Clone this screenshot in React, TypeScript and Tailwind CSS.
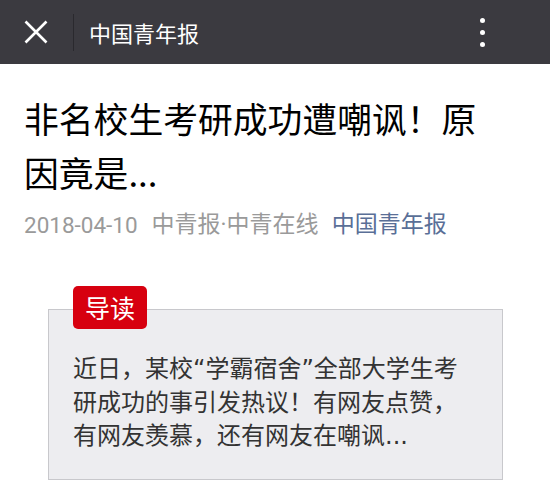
import React from "react";

export default function App() {
  const cjk = { fontFamily: '"Noto Sans CJK SC", "Noto Sans", sans-serif' };
  const mixed = { fontFamily: 'Roboto, "Noto Sans CJK SC", sans-serif' };
  return (
    <div className="w-[550px] h-[497px] bg-white overflow-hidden" style={cjk}>
      <div className="h-16 bg-[#3b3a40] flex items-center relative">
        <div className="w-[73px] h-full flex items-center justify-center">
          <svg width="24" height="24" viewBox="0 0 24 24" className="ml-[-2px]">
            <path d="M1.5 1.5 L22.5 22.5 M22.5 1.5 L1.5 22.5" stroke="#ffffff" strokeWidth="2.6" strokeLinecap="butt" />
          </svg>
        </div>
        <div className="w-px h-[37px] bg-[#2a292e]" />
        <div className="ml-[15px] text-white text-[22px] leading-none">中国青年报</div>
        <div className="ml-auto mr-[65px] flex flex-col gap-[7px]">
          <div className="w-[5px] h-[5px] rounded-full bg-white" />
          <div className="w-[5px] h-[5px] rounded-full bg-white" />
          <div className="w-[5px] h-[5px] rounded-full bg-white" />
        </div>
      </div>
      <div className="px-6">
        <h1 className="mt-[27px] w-[472px] text-[34.8px] leading-[54px] text-black font-normal">
          非名校生考研成功遭嘲讽！原因竟是...
        </h1>
        <div className="mt-[11px] text-[23px] leading-[30px] flex" style={mixed}>
          <span className="text-[#9a9a9a] text-[22.5px]">2018-04-10</span>
          <span className="text-[#9a9a9a] ml-[14px]">中青报·中青在线</span>
          <span className="text-[#5a6f97] ml-[13px]">中国青年报</span>
        </div>
        <div className="relative ml-6 mr-[23px] mt-[69px] bg-[#ededf0] border border-[#c8c8cc] pt-[43px] pb-[25px] pl-[24px] pr-[36px]">
          <div className="absolute left-[24px] top-[-24px] h-[43px] w-[74px] bg-[#d7000f] rounded-[5px] text-white text-[25px] leading-none flex items-center justify-center">
            导读
          </div>
          <p className="text-[24px] leading-[33.5px] text-[#333333]" style={{ fontFamily: '"DejaVu Sans", "Noto Sans CJK SC", sans-serif' }}>
            近日，某校“学霸宿舍”全部大学生考研成功的事引发热议！有网友点赞，有网友羡慕，还有网友在嘲讽...
          </p>
        </div>
      </div>
    </div>
  );
}
